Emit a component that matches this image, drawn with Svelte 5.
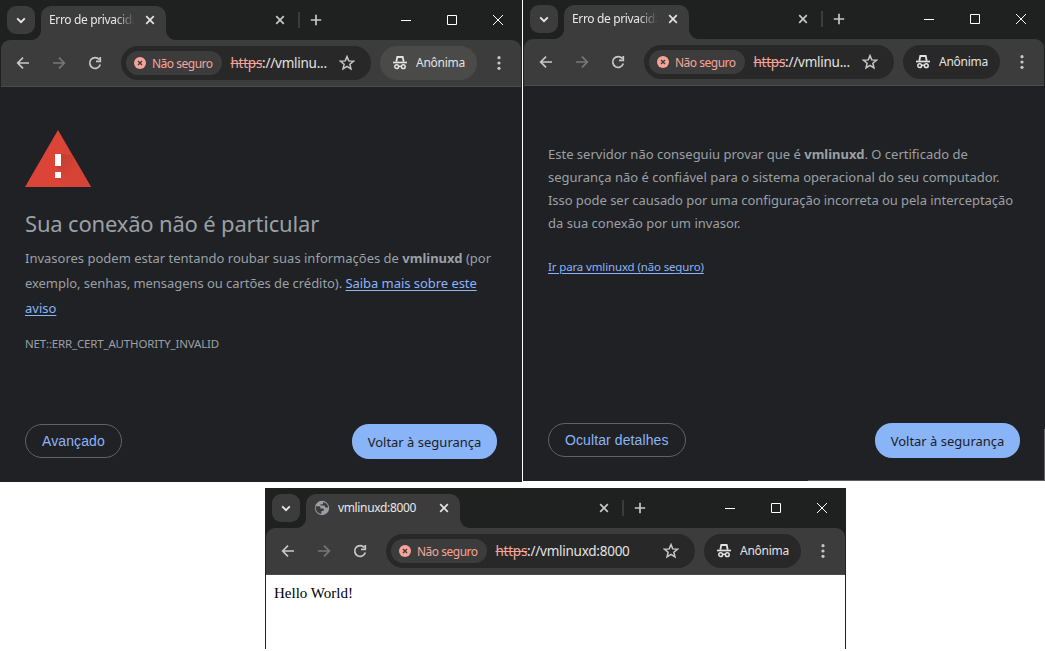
<script>
  const windows = [
    { id: 'first', title: 'Erro de privacidade', host: 'vmlinu...', page: 'warning', hovered: true },
    { id: 'second', title: 'Erro de privacidade', host: 'vmlinu...', page: 'details' },
    { id: 'third', title: 'vmlinuxd:8000', host: 'vmlinuxd:8000', page: 'hello', globe: true }
  ];
</script>

{#snippet cross()}
  <svg class="cross" width="10" height="10" viewBox="0 0 10 10"><path d="M1.2 1.2 8.8 8.8M8.8 1.2 1.2 8.8" /></svg>
{/snippet}

{#snippet browser(w)}
  <section class="window {w.id}">
    <header class="strip">
      <span class="search"><svg width="10" height="7" viewBox="0 0 10 7"><path d="M1.2 1.3 5 5.1 8.8 1.3" /></svg></span>
      <div class="tab" class:wide={w.globe}>
        {#if w.globe}
          <svg class="globe" width="16" height="16" viewBox="0 0 16 16">
            <circle cx="8" cy="8" r="7.2" fill="#9aa0a6" />
            <path fill="#3c3c3c" d="M2 6.2h3.2c.7 0 1.2.6 1.2 1.2v1h2.2c.8 0 1.3.6 1.3 1.3 0 .8-.5 1.3-1.3 1.3H7.4v2.8C4 13.7 1.6 11 1.7 7.6zM9.2 1.9v1c0 .8-.6 1.3-1.4 1.3H6.5v1.3h3.2c.8 0 1.3.6 1.3 1.4v.6h2.4c.4 0 .8-.2.8-.6C13.800 4.500 11.800 2.400 9.200 1.900z" />
          </svg>
        {/if}
        <span class="title" class:fade={!w.globe}>{w.title}</span>
        {@render cross()}
      </div>
      <div class="idle">{@render cross()}</div>
      <i class="sep"></i>
      <span class="plus"><svg width="12" height="12" viewBox="0 0 12 12"><path d="M6 .8v10.400M.8 6h10.400" /></svg></span>
      <div class="controls">
        <svg width="12" height="12" viewBox="0 0 12 12"><path d="M1 6.500h10" /></svg>
        <svg width="12" height="12" viewBox="0 0 12 12"><path d="M1.500 1.500h9v9h-9z" /></svg>
        <svg width="12" height="12" viewBox="0 0 12 12"><path d="M1 1l10 10M11 1 1 11" /></svg>
      </div>
    </header>
    <nav class="bar">
      <svg class="nav" width="36" height="16" viewBox="0 0 36 16"><path d="M24 8H12.700M18 2.700 12.700 8 18 13.300" /></svg>
      <svg class="nav dim" width="36" height="16" viewBox="0 0 36 16"><path d="M12 8h11.300M18 2.700 23.300 8 18 13.300" /></svg>
      <svg class="nav" width="36" height="16" viewBox="0 0 36 16"><path d="M22.300 4.500A5.400 5.400 0 1 0 23.300 9.500M23.300 2v4.300H19" /></svg>
      <div class="omnibox">
        <span class="chip">
          <svg width="12" height="12" viewBox="0 0 12 12"><circle cx="6" cy="6" r="6" fill="#f6a49a" /><path d="M4 4l4 4M8 4 4 8" stroke="#3c3c3c" stroke-width="1.400" /></svg>
          <b>Não seguro</b>
        </span>
        <span class="url"><s>https</s>://{w.host}</span>
        <svg class="star" width="16" height="16" viewBox="0 0 16 16"><path d="M8 1.600 9.750 5.900 14.400 6.250 10.850 9.250 11.950 13.800 8 11.350 4.050 13.800 5.150 9.250 1.600 6.250 6.250 5.900z" /></svg>
      </div>
      <div class="anon" class:hovered={w.hovered}>
        <svg width="16" height="16" viewBox="0 0 16 16">
          <path d="M4.300 6.700 5.300 2h5.400l1 4.700" fill="none" stroke="#e3e3e3" stroke-width="1.800" />
          <path d="M1 7.500h14" stroke="#e3e3e3" stroke-width="1.700" />
          <g fill="none" stroke="#e3e3e3" stroke-width="1.500"><circle cx="4.700" cy="11.700" r="1.900" /><circle cx="11.300" cy="11.700" r="1.900" /><path d="M6.700 11.300h2.600" /></g>
        </svg>
        <span>Anônima</span>
      </div>
      <svg class="dots" width="4" height="16" viewBox="0 0 4 16"><circle cx="2" cy="2.700" r="1.600" /><circle cx="2" cy="8" r="1.600" /><circle cx="2" cy="13.300" r="1.600" /></svg>
    </nav>
    <main class={w.page}>
      {#if w.page === 'warning'}
        <svg class="alert" width="66" height="57" viewBox="0 0 66 57">
          <defs><linearGradient id="shade" x1="0" y1="0" x2="1" y2="1"><stop offset="0" stop-color="#b5372b" /><stop offset=".5" stop-color="#d34336" /></linearGradient></defs>
          <path d="M33 0 66 57H0z" fill="#db4437" />
          <path d="M36 24 47.500 25 66 57H41L30 48l6-1v-6l-6-5z" fill="url(#shade)" opacity=".7" />
          <path d="M30 24h6v12h-6zM30 42h6v6h-6z" fill="#fff" />
        </svg>
        <h1>Sua conexão não é particular</h1>
        <p>Invasores podem estar tentando roubar suas informações de <strong>vmlinuxd</strong> (por<br /><span class="tight">exemplo, senhas, mensagens ou cartões de crédito). <a href="#mais">Saiba mais sobre este</a></span><br /><a href="#mais">aviso</a></p>
        <div class="code">NET::ERR_CERT_AUTHORITY_INVALID</div>
      {:else if w.page === 'details'}
        <p>Este servidor não conseguiu provar que é <strong>vmlinuxd</strong>. O certificado de<br />segurança não é confiável para o sistema operacional do seu computador.<br /><span class="tight">Isso pode ser causado por uma configuração incorreta ou pela interceptação</span><br />da sua conexão por um invasor.</p>
        <a class="proceed" href="#ir">Ir para vmlinuxd (não seguro)</a>
      {:else}
        Hello World!
      {/if}
      {#if w.page !== 'hello'}
        <div class="actions">
          <button class="ghost">{w.page === 'warning' ? 'Avançado' : 'Ocultar detalhes'}</button>
          <button class="primary">Voltar à segurança</button>
        </div>
      {/if}
    </main>
  </section>
{/snippet}

<div class="canvas">
  <div class="pair">
    {@render browser(windows[0])}
    {@render browser(windows[1])}
  </div>
  {@render browser(windows[2])}
</div>

<style>
  :global(body) { background: #fff; overflow: hidden; }
  * { box-sizing: border-box; }
  .canvas { width: 1045px; height: 651px; overflow: hidden; font-family: 'Noto Sans', sans-serif; }
  .pair { display: flex; gap: 1px; height: 488px; align-items: flex-start; }
  .window { display: flex; flex-direction: column; width: 522px; height: 482px; background: #1f2020; white-space: nowrap; flex: none; }
  .second { margin-top: -1px; }
  .second main {
    background:
      linear-gradient(#5f5f64, #5f5f64) right bottom / 1px 52px no-repeat,
      linear-gradient(#5f5f64, #5f5f64) right bottom / 237px 1px no-repeat,
      #202124;
  }
  .third { width: 581px; height: 161px; margin-left: 265px; }
  .strip { display: flex; align-items: center; height: 40px; padding: 0 1px 0 7px; flex: none; }
  svg { display: block; flex: none; fill: none; }
  .search { width: 28px; height: 28px; border-radius: 9px; background: #3c3c3c; display: flex; align-items: center; justify-content: center; margin-right: 6px; }
  .search path { stroke: #e8e8e8; stroke-width: 1.9; }
  .tab { position: relative; align-self: flex-end; width: 125px; height: 34px; background: #3c3c3c; border-radius: 10px 10px 0 0; display: flex; align-items: center; padding: 0 11px 6px 8px; }
  .tab::before, .tab::after { content: ''; position: absolute; bottom: 0; width: 10px; height: 10px; }
  .tab::before { left: -10px; background: radial-gradient(circle at 0 0, transparent 9.600px, #3c3c3c 10.400px); }
  .tab::after { right: -10px; background: radial-gradient(circle at 100% 0, transparent 9.600px, #3c3c3c 10.400px); }
  .tab.wide { width: 154px; }
  .title { flex: 1; overflow: hidden; color: #e8e8e8; font-size: 12px; line-height: 18px; letter-spacing: -0.35px; margin-right: 11px; }
  .fade { mask-image: linear-gradient(90deg, #000 66px, transparent 86px); }
  .globe { margin-right: 8px; }
  .cross { stroke: #e3e3e3; stroke-width: 1.7; }
  .idle { flex: 1; display: flex; justify-content: flex-end; padding-right: 13px; }
  .idle .cross { stroke: #c7c7c7; }
  .sep { width: 2px; height: 16px; background: #3c3c3c; margin-right: 2px; }
  .plus { width: 28px; display: flex; justify-content: center; margin-right: 53px; stroke: #c7c7c7; stroke-width: 1.7; }
  .controls { display: flex; }
  .controls svg { width: 46px; stroke: #fff; stroke-width: 1; }
  .bar { display: flex; align-items: center; height: 47px; margin: 0 1px; background: #3c3c3c; border-radius: 9px 9px 0 0; border-bottom: 1px solid #4b4b4d; padding-left: 4px; flex: none; }
  .nav { stroke: #c7c7c7; stroke-width: 1.7; }
  .dim { stroke: #777; }
  .omnibox { flex: 1; height: 34px; margin-left: 8px; background: #282828; border-radius: 17px; display: flex; align-items: center; padding: 0 16px 0 5px; }
  .chip { width: 96px; height: 24px; border-radius: 12px; background: #3c3c3c; display: flex; align-items: center; padding-left: 8px; gap: 6px; }
  .chip b { font-weight: 400; font-size: 12px; color: #f6a49a; letter-spacing: -0.5px; }
  .url { margin-left: 8.500px; color: #e3e3e3; font-size: 13.500px; letter-spacing: -0.25px; flex: 1; }
  .url s { color: #f6a49a; }
  .star { stroke: #c7c7c7; stroke-width: 1.5; }
  .anon { width: 97px; height: 34px; margin-left: 9px; background: #282828; border-radius: 17px; display: flex; align-items: center; padding-left: 12px; gap: 8px; color: #e3e3e3; font-size: 12px; letter-spacing: -0.25px; }
  .anon.hovered { background: #4a4a48; }
  .anon span { position: relative; top: -0.5px; }
  .dots { margin: 0 20px; }
  .dots circle { fill: #c7c7c7; }
  main { flex: 1; background: #202124; color: #9aa0a6; display: flex; flex-direction: column; align-items: flex-start; min-height: 0; }
  .warning { padding: 43px 25px 23px; }
  .details { padding: 57px 25px 23px; }
  .hello { background: #fff; color: #000; margin: 0 1px; padding: 8px; font: 15px/20px 'Liberation Serif', serif; }
  h1 { margin: 20px 0 0; font-size: 22px; font-weight: 400; line-height: 32px; letter-spacing: -0.18px; }
  p { margin: 7px 0 0; font-size: 13px; line-height: 25px; }
  .tight { letter-spacing: -0.05px; }
  .details p { margin: 0; line-height: 23px; }
  a { color: #8ab4f8; text-underline-offset: 2px; }
  .code { margin-top: 13px; font-size: 11.500px; line-height: 20px; letter-spacing: -0.17px; }
  .proceed { margin-top: 22px; font-size: 11.500px; line-height: 20px; letter-spacing: -0.14px; }
  .actions { display: flex; justify-content: space-between; align-items: flex-start; width: 472px; margin-top: auto; height: 35px; }
  button { height: 34px; border-radius: 17px; padding: 0 16px; font: 14px 'Liberation Sans', sans-serif; }
  .ghost { border: 1px solid #5f6368; background: none; color: #8ab4f8; letter-spacing: 0.1px; }
  .primary { height: 35px; width: 145px; padding: 1px 0 0; border: 0; background: #8ab4f8; color: #202124; font: 13px 'Noto Sans', sans-serif; }
</style>
